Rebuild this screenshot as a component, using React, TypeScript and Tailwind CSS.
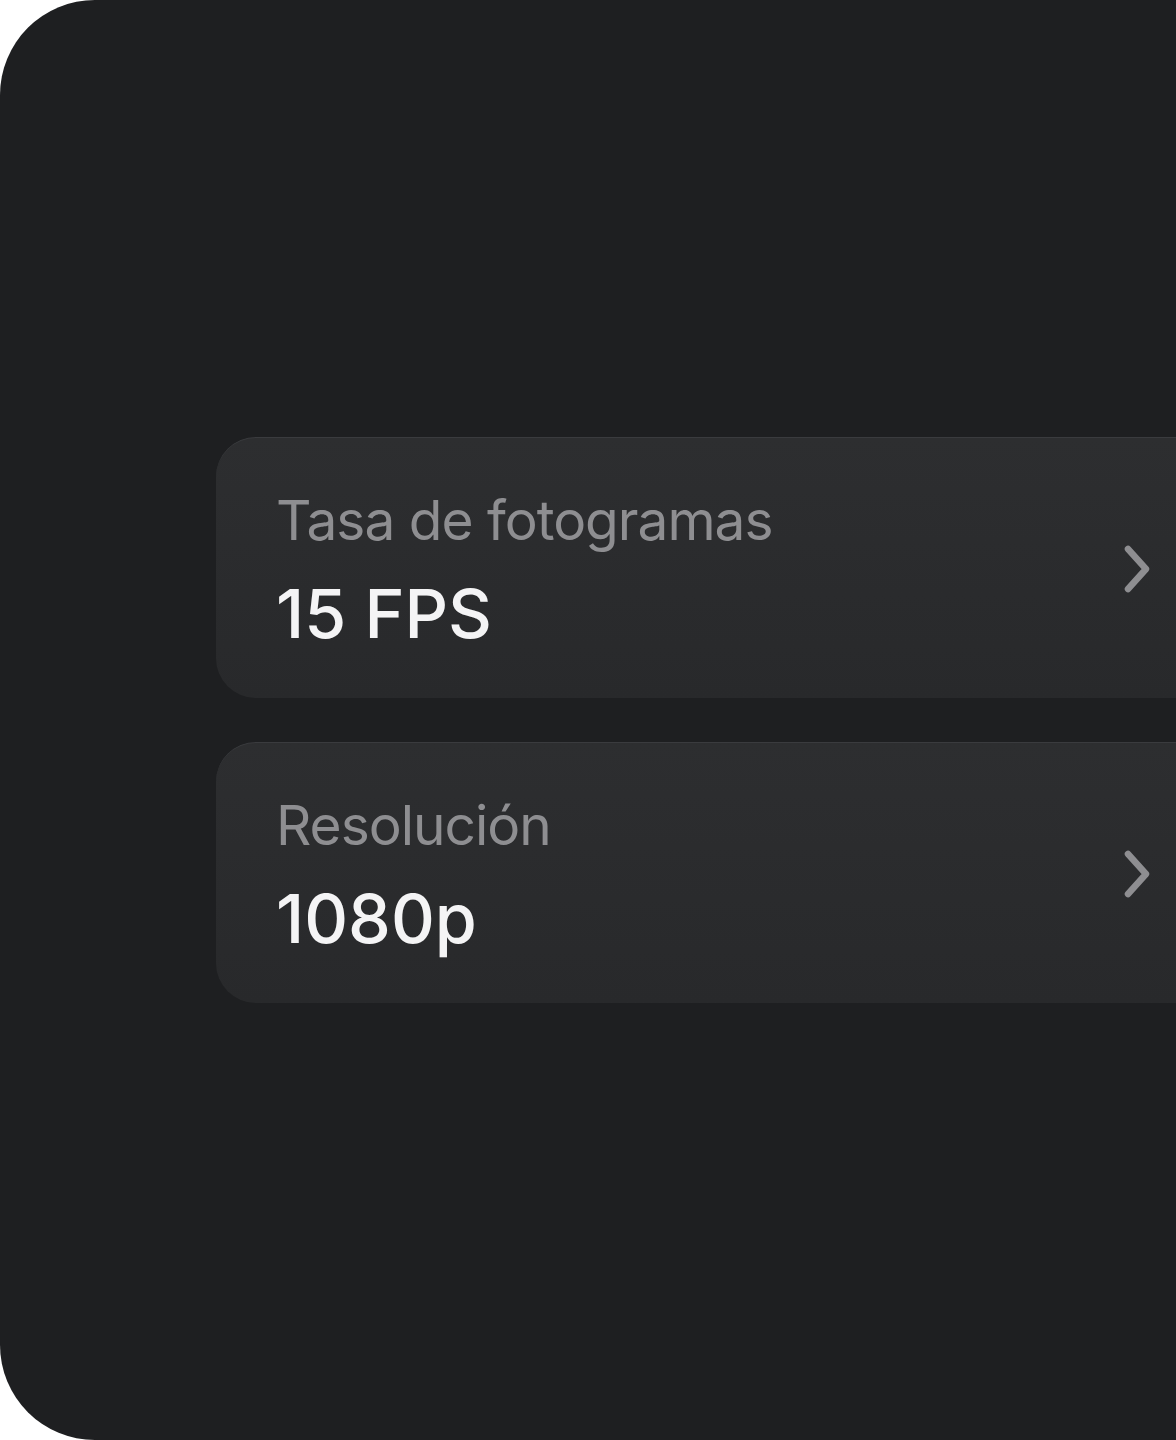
type Row = { label: string; value: string }

const rows: Row[] = [
  { label: 'Tasa de fotogramas', value: '15 FPS' },
  { label: 'Resolución', value: '1080p' },
]

function Chevron() {
  return (
    <svg width="30" height="52" viewBox="0 0 30 52" fill="none" className="text-[#8e8e91]">
      <path d="M6 7 L24 27 L6 47" stroke="currentColor" strokeWidth="6.5" strokeLinecap="round" strokeLinejoin="round" />
    </svg>
  )
}

function SettingRow({ label, value }: Row) {
  return (
    <div className="flex h-[261px] items-center rounded-l-[40px] border-t border-[#3a3b3e] bg-gradient-to-b from-[#2d2e30] to-[#28292b] pl-[60px] pr-[24px]">
      <div className="flex flex-1 flex-col">
        <span className="text-[55px] leading-[64px] tracking-[-1px] text-[#8e8e91]">{label}</span>
        <span className="mt-[25px] text-[68px] font-medium leading-[72px] tracking-[0px] text-[#f4f4f5]">{value}</span>
      </div>
      <Chevron />
    </div>
  )
}

export default function App() {
  return (
    <div className="h-[1440px] w-full bg-white" style={{ fontFamily: 'Inter, "Noto Sans", sans-serif' }}>
      <div className="flex h-full flex-col gap-[44px] rounded-l-[95px] bg-[#1e1f21] pl-[216px] pt-[437px]">
        {rows.map((r) => (
          <SettingRow key={r.label} {...r} />
        ))}
      </div>
    </div>
  )
}
